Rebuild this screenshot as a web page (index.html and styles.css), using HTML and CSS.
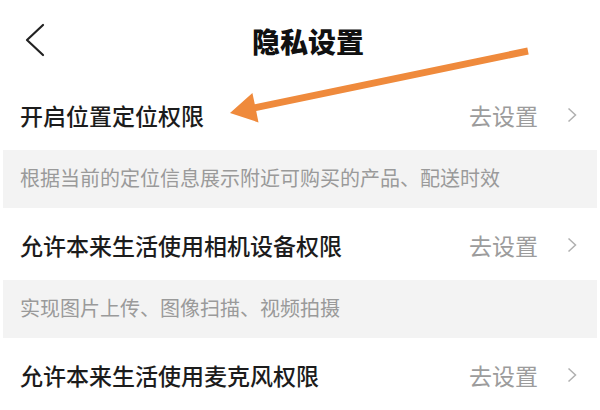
FILE: index.html
```html
<!DOCTYPE html>
<html lang="zh-CN">
<head>
    <meta charset="UTF-8">
    <meta name="viewport" content="width=device-width, initial-scale=1.0">
    <title>隐私设置</title>
    <link rel="stylesheet" href="styles.css">
</head>
<body>

<div class="page">
    <!-- Top bar -->
    <div class="header">
        <svg class="back" width="20" height="34" viewBox="0 0 20 34">
            <polyline points="18,2 2,17 18,32" fill="none" stroke="#222" stroke-width="2.2" stroke-linecap="round" stroke-linejoin="round"/>
        </svg>
        <h1 class="title">隐私设置</h1>
        <span></span>
    </div>

    <!-- Permission list -->
    <div class="row">
        <span class="label">开启位置定位权限</span>
        <span class="action">去设置
            <svg class="chev" width="10" height="16" viewBox="0 0 10 16">
                <polyline points="1.5,1.5 8.5,8 1.5,14.5" fill="none" stroke="#b0b0b0" stroke-width="1.5"/>
            </svg>
        </span>
    </div>
    <div class="note">根据当前的定位信息展示附近可购买的产品、配送时效</div>

    <div class="row">
        <span class="label">允许本来生活使用相机设备权限</span>
        <span class="action">去设置
            <svg class="chev" width="10" height="16" viewBox="0 0 10 16">
                <polyline points="1.5,1.5 8.5,8 1.5,14.5" fill="none" stroke="#b0b0b0" stroke-width="1.5"/>
            </svg>
        </span>
    </div>
    <div class="note">实现图片上传、图像扫描、视频拍摄</div>

    <div class="row">
        <span class="label">允许本来生活使用麦克风权限</span>
        <span class="action">去设置
            <svg class="chev" width="10" height="16" viewBox="0 0 10 16">
                <polyline points="1.5,1.5 8.5,8 1.5,14.5" fill="none" stroke="#b0b0b0" stroke-width="1.5"/>
            </svg>
        </span>
    </div>

    <!-- Annotation arrow drawn over the screenshot -->
    <svg class="pointer" width="600" height="410" viewBox="0 0 600 410">
        <polygon points="230,113 252.4,93 254.8,104.3 527.3,47.6 528.7,54.4 256.2,111.1 258.5,122.4" fill="#ef8a3c"/>
    </svg>
</div>

</body>
</html>
```

FILE: styles.css
```css
body {
    margin: 0;
    background: #fff;
    font-family: "Noto Sans CJK SC", "Noto Sans", sans-serif;
}
.page {
    position: relative;
    width: 600px;
    height: 410px;
    overflow: hidden;
}

.header {
    height: 78px;
    display: grid;
    grid-template-columns: 60px 1fr 60px;
    align-items: center;
}
.back {
    margin-left: 25px;
    margin-top: 2px;
}
.title {
    margin: 0;
    padding-left: 16px;
    padding-top: 4px;
    text-align: center;
    font-size: 28px;
    font-weight: 900;
    color: #111;
}

.row {
    height: 72px;
    display: flex;
    align-items: center;
    justify-content: space-between;
    padding: 2px 23px 0 20px;
    box-sizing: border-box;
}
.label {
    font-size: 23px;
    font-weight: 500;
    color: #1c1c1c;
}
.action {
    display: flex;
    align-items: center;
    gap: 29px;
    font-size: 23px;
    color: #9c9c9c;
}

.note {
    height: 58px;
    margin: 0 3px;
    padding: 0 0 4px 17px;
    box-sizing: border-box;
    display: flex;
    align-items: center;
    background: #f3f3f3;
    font-size: 20px;
    color: #9a9a9a;
}

.pointer {
    position: absolute;
    left: 0;
    top: 0;
    pointer-events: none;
}
```
